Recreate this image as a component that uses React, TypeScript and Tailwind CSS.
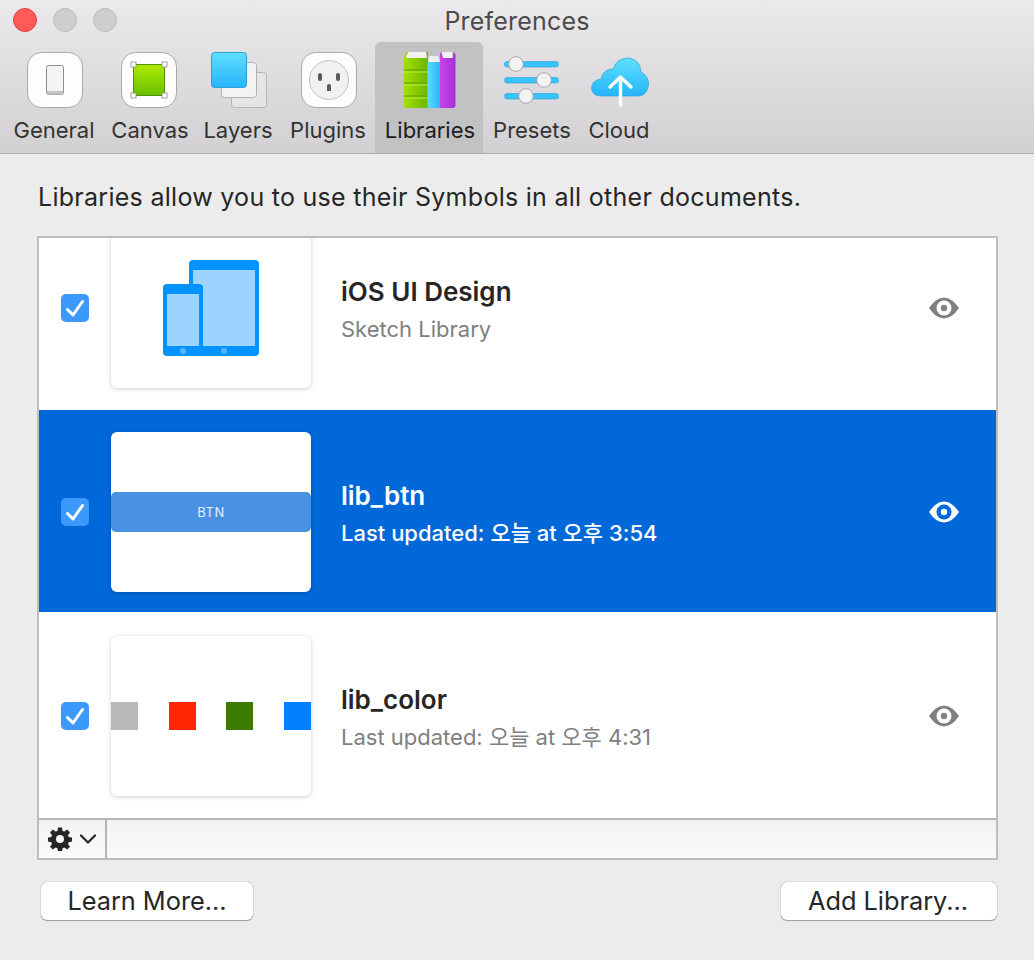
function GeneralIcon() {
  return (
    <svg width="60" height="60" viewBox="0 0 60 60">
      <rect x="2.5" y="2.5" width="55" height="55" rx="14" fill="#fdfdfd" stroke="#a9a9a9" />
      <rect x="21.5" y="15.5" width="17" height="29" rx="2" fill="#f4f4f4" stroke="#8f8f8f" />
      <rect x="22" y="41" width="16" height="3.5" fill="#c4c4c4" />
    </svg>
  );
}

function CanvasIcon() {
  return (
    <svg width="60" height="60" viewBox="0 0 60 60">
      <defs>
        <linearGradient id="cv" x1="0" y1="0" x2="0" y2="1">
          <stop offset="0" stopColor="#aeea00" />
          <stop offset="1" stopColor="#68bf00" />
        </linearGradient>
      </defs>
      <rect x="2.5" y="2.5" width="55" height="55" rx="14" fill="#fdfdfd" stroke="#a9a9a9" />
      <rect x="14.5" y="14.5" width="31" height="31" fill="url(#cv)" stroke="#4f9400" />
      {[
        [12, 12],
        [43, 12],
        [12, 43],
        [43, 43],
      ].map(([x, y]) => (
        <rect key={`${x}-${y}`} x={x} y={y} width="5" height="5" fill="#fff" stroke="#8a8a8a" strokeWidth="0.8" />
      ))}
    </svg>
  );
}

function LayersIcon() {
  return (
    <svg width="60" height="60" viewBox="0 0 60 60">
      <defs>
        <linearGradient id="ly" x1="0" y1="0" x2="0" y2="1">
          <stop offset="0" stopColor="#5fe0ff" />
          <stop offset="1" stopColor="#25b4fb" />
        </linearGradient>
      </defs>
      <rect x="22.5" y="22.5" width="35" height="35" rx="3" fill="#e6e5e6" stroke="#b5b5b5" />
      <rect x="12.5" y="12.5" width="35" height="35" rx="3" fill="#f3f3f3" stroke="#b0b0b0" />
      <rect x="2.5" y="2.5" width="35" height="35" rx="3" fill="url(#ly)" stroke="#2a9fd8" />
    </svg>
  );
}

function PluginsIcon() {
  return (
    <svg width="60" height="60" viewBox="0 0 60 60">
      <rect x="2.5" y="2.5" width="55" height="55" rx="14" fill="#fdfdfd" stroke="#a9a9a9" />
      <circle cx="30" cy="30" r="19.5" fill="#f1f1f1" stroke="#c2c2c2" />
      <rect x="19" y="23" width="4" height="8" rx="2" fill="#5a5a5a" />
      <rect x="37" y="23" width="4" height="8" rx="2" fill="#5a5a5a" />
      <path d="M28 41v-5a2 2 0 0 1 4 0v5z" fill="#5a5a5a" />
    </svg>
  );
}

function LibrariesIcon() {
  return (
    <svg width="60" height="60" viewBox="0 0 60 60">
      <defs>
        <linearGradient id="bg" x1="0" y1="0" x2="1" y2="0">
          <stop offset="0" stopColor="#a6de00" />
          <stop offset="1" stopColor="#6ab800" />
        </linearGradient>
        <linearGradient id="bb" x1="0" y1="0" x2="1" y2="0">
          <stop offset="0" stopColor="#5bdcff" />
          <stop offset="1" stopColor="#2bb4f5" />
        </linearGradient>
        <linearGradient id="bp" x1="0" y1="0" x2="1" y2="0">
          <stop offset="0" stopColor="#cc44ec" />
          <stop offset="1" stopColor="#a42fd4" />
        </linearGradient>
      </defs>
      {/* green book */}
      <path d="M4 8Q5 4 7 2L28 2 28 58H6Q4 58 4 56z" fill="url(#bg)" />
      <path d="M6 8Q7 4 8.500 2H26L27 8z" fill="#f2f2f2" />
      {[20, 33, 46].map((y) => (
        <path key={y} d={`M4 ${y}h24`} stroke="#5fa600" strokeWidth="1.200" />
      ))}
      {[22, 35, 48].map((y) => (
        <path key={y} d={`M4 ${y}h24`} stroke="#c3ea45" strokeWidth="1" />
      ))}
      {/* blue book */}
      <path d="M29 6h9l2 7H28z" fill="#eef0f0" />
      <rect x="27.500" y="12" width="13" height="46" rx="1" fill="url(#bb)" />
      {/* purple book */}
      <path d="M41 2h11v6H43z" fill="#f2f2f2" />
      <path d="M40 3l1.500-1 1.500 6h10l.5-6 1 1q1 1 1 2v50q0 3-3 3H40z" fill="url(#bp)" />
    </svg>
  );
}

function PresetsIcon() {
  return (
    <svg width="60" height="60" viewBox="0 0 60 60">
      {[
        [14, 14],
        [30, 42],
        [46, 24],
      ].map(([y, x]) => (
        <g key={y}>
          <rect x="2.500" y={y - 2.5} width="54" height="5.500" rx="2.500" fill="#38c3fb" stroke="#2ba0dc" strokeWidth="0.6" />
          <circle cx={x} cy={y} r="7.300" fill="#f3f3f3" stroke="#a8a8a8" />
        </g>
      ))}
    </svg>
  );
}

function CloudIcon() {
  return (
    <svg width="60" height="60" viewBox="0 0 60 60">
      <defs>
        <linearGradient id="cl" x1="0" y1="0" x2="0" y2="1">
          <stop offset="0" stopColor="#5fe0ff" />
          <stop offset="1" stopColor="#25b4fb" />
        </linearGradient>
      </defs>
      <path
        d="M11 46Q2 46 1.500 38Q2 30 11 29Q13 19 23 19Q27 8 38 8Q50 9 51 22Q59 26 58.500 35Q57 46 48 46z"
        fill="url(#cl)"
        stroke="#2ba0dc"
        strokeWidth="0.7"
      />
      <path d="M30.500 55V28M20 37l10.500-10L41 37" fill="none" stroke="#fbfbfb" strokeWidth="3.400" strokeLinecap="round" strokeLinejoin="round" />
    </svg>
  );
}

function Eye({ color }: { color: string }) {
  return (
    <svg width="30" height="22" viewBox="0 0 30 22" className="shrink-0">
      <path d="M0 11Q7 0.500 15 0.500T30 11Q23 21.500 15 21.500T0 11z" fill={color} />
      <circle cx="15" cy="11" r="7.500" fill={color === '#ffffff' ? '#0068d9' : '#ffffff'} />
      <circle cx="15" cy="11" r="3.200" fill={color} />
    </svg>
  );
}

function Check() {
  return (
    <div className="flex h-[28px] w-[28px] shrink-0 items-center justify-center rounded-[5px] bg-[#3b99fc]">
      <svg width="18" height="18" viewBox="0 0 18 18">
        <path d="M1.500 10.500l5.500 5.500L16.500 2.500" fill="none" stroke="#fff" strokeWidth="3" strokeLinecap="round" strokeLinejoin="round" />
      </svg>
    </div>
  );
}

function Devices() {
  return (
    <svg width="98" height="98" viewBox="0 0 98 98">
      <rect x="27" y="2" width="70" height="96" rx="4" fill="#0293ff" />
      <rect x="31" y="12" width="62" height="76" fill="#9cd4ff" />
      <circle cx="62" cy="93" r="3" fill="#55b4ff" />
      <rect x="1" y="26" width="40" height="72" rx="4" fill="#0293ff" />
      <rect x="5" y="36" width="32" height="52" fill="#9cd4ff" />
      <circle cx="21" cy="93" r="3" fill="#55b4ff" />
    </svg>
  );
}

const tabs = [
  { label: 'General', width: 'w-[108px]', icon: <GeneralIcon />, iconClass: 'ml-[2px]' },
  { label: 'Canvas', width: 'w-[84px]', icon: <CanvasIcon />, iconClass: '-ml-[2px]' },
  { label: 'Layers', width: 'w-[92px]', icon: <LayersIcon />, iconClass: 'ml-[2px]' },
  { label: 'Plugins', width: 'w-[88px]', icon: <PluginsIcon />, iconClass: 'ml-[2px]' },
  { label: 'Libraries', width: 'w-[108px] ml-[3px] pl-[2px] bg-[#c3c2c3] rounded-t-[6px]', icon: <LibrariesIcon />, iconClass: '' },
  { label: 'Presets', width: 'w-[96px] pl-[2px]', icon: <PresetsIcon />, iconClass: '' },
  { label: 'Cloud', width: 'w-[80px]', icon: <CloudIcon />, iconClass: 'ml-[1px]' },
];

function Swatches() {
  return (
    <div className="flex h-full items-center justify-between">
      <div className="h-[28px] w-[27px] bg-[#b9b9b9]" />
      <div className="h-[28px] w-[27px] bg-[#ff2600]" />
      <div className="h-[28px] w-[27px] bg-[#3d7a00]" />
      <div className="h-[28px] w-[27px] bg-[#0080ff]" />
    </div>
  );
}

function Row({
  title,
  subtitle,
  selected,
  children,
}: {
  title: string;
  subtitle: string;
  selected?: boolean;
  children: React.ReactNode;
}) {
  return (
    <div className={`mb-[2px] h-[202px] pl-[22px] pr-[37px] pt-[22px] ${selected ? 'bg-[#0068d9]' : 'bg-white'}`}>
      <div className="flex h-[160px] items-center">
        <Check />
        <div className="ml-[22px] h-[160px] w-[200px] shrink-0 overflow-hidden rounded-[6px] bg-white shadow-[0_1px_4px_rgba(0,0,0,0.2)]">
          {children}
        </div>
        <div className="ml-[30px] flex-1 pt-[6px]">
          <div className={`text-[26px] leading-[36px] font-semibold ${selected ? 'text-white' : 'text-[#262626]'}`}>{title}</div>
          <div className={`text-[22px] leading-[38px] ${selected ? 'font-medium text-white' : 'text-[#808080]'}`}>{subtitle}</div>
        </div>
        <Eye color={selected ? '#ffffff' : '#808080'} />
      </div>
    </div>
  );
}

export default function App() {
  return (
    <div className="h-[960px] w-[1034px] overflow-hidden bg-[#ececec] font-['Inter','Noto_Sans_CJK_KR',sans-serif]">
      {/* Title bar + toolbar */}
      <div className="h-[154px] border-b-[1px] border-[#ababab] bg-gradient-to-b from-[#ebe9eb] to-[#d2d0d2]">
        <div className="grid h-[42px] grid-cols-[1fr_auto_1fr] pt-[8px]">
          <div className="flex gap-[16px] pl-[13px]">
            <div className="h-[24px] w-[24px] rounded-full border border-[#e0443e] bg-[#fc5b57]" />
            <div className="h-[24px] w-[24px] rounded-full border border-[#bcbcbc] bg-[#cfcdcf]" />
            <div className="h-[24px] w-[24px] rounded-full border border-[#bcbcbc] bg-[#cfcdcf]" />
          </div>
          <div className="text-[25px] leading-[26px] tracking-[0.2px] text-[#4b4b4b]">Preferences</div>
          <div />
        </div>
        <div className="flex h-[111px]">
          {tabs.map((tab) => (
            <div key={tab.label} className={`flex h-[111px] flex-col items-center ${tab.width}`}>
              <div className={`mt-[8px] h-[60px] w-[60px] ${tab.iconClass}`}>{tab.icon}</div>
              <div className={`mt-[6px] text-[22px] leading-[28px] ${tab.label === 'Libraries' ? 'text-[#1d1d1d]' : 'text-[#333333]'}`}>{tab.label}</div>
            </div>
          ))}
        </div>
      </div>

      {/* Body */}
      <div className="px-[37px]">
        <p className="pt-[28px] pl-[1px] text-[25px] leading-[30px] tracking-[0.28px] text-[#262626]">
          Libraries allow you to use their Symbols in all other documents.
        </p>
        <div className="mt-[24px] flex h-[624px] w-[961px] flex-col border-2 border-[#bdbdbd]">
          <div className="h-[580px] overflow-hidden bg-white">
            <div className="-mt-[32px]">
              <Row title="iOS UI Design" subtitle="Sketch Library">
                <div className="flex h-full justify-center pt-[30px]">
                  <Devices />
                </div>
              </Row>
              <Row title="lib_btn" subtitle="Last updated: 오늘 at 오후 3:54" selected>
                <div className="flex h-full items-center">
                  <div className="flex h-[40px] w-full items-center justify-center rounded-[5px] bg-[#4a90e2] pt-[2px] text-[13px] tracking-[0.5px] text-[#e6f0fb]">
                    BTN
                  </div>
                </div>
              </Row>
              <Row title="lib_color" subtitle="Last updated: 오늘 at 오후 4:31">
                <Swatches />
              </Row>
            </div>
          </div>
          <div className="flex h-[40px] border-t-2 border-[#b5b5b5] bg-gradient-to-b from-[#f2f2f2] to-[#fbfbfb]">
            <div className="flex w-[68px] items-center gap-[7px] border-r-2 border-[#b5b5b5] pl-[9px]">
              <svg width="24" height="24" viewBox="0 0 24 24" className="shrink-0">
                <path
                  fill="#262626"
                  fillRule="evenodd"
                  d="M10 0.500h4l.6 3.400 1.700.7 2.900-2 2.800 2.800-2 2.900.7 1.700 3.300.6v4l-3.300.6-.7 1.700 2 2.900-2.800 2.800-2.900-2-1.700.7-.6 3.400h-4l-.6-3.400-1.700-.7-2.900 2-2.800-2.800 2-2.900-.7-1.700-3.300-.6v-4l3.300-.6.7-1.700-2-2.900 2.800-2.800 2.900 2 1.700-.7zM12 8a4 4 0 1 0 0 8 4 4 0 0 0 0-8z"
                />
              </svg>
              <svg width="18" height="12" viewBox="0 0 18 12" className="shrink-0">
                <path d="M2 2.500l7 7 7-7" fill="none" stroke="#262626" strokeWidth="2.200" strokeLinecap="round" strokeLinejoin="round" />
              </svg>
            </div>
          </div>
        </div>
        <div className="mt-[22px] flex justify-between pl-[4px]">
          <button className="h-[38px] w-[212px] rounded-[6px] bg-white text-[25.300px] leading-[38px] text-[#262626] shadow-[0_0_1px_rgba(0,0,0,0.5),0_1px_1px_rgba(0,0,0,0.3)]">
            Learn More...
          </button>
          <button className="h-[38px] w-[216px] rounded-[6px] bg-white pr-[2px] text-[25.300px] leading-[38px] text-[#262626] shadow-[0_0_1px_rgba(0,0,0,0.5),0_1px_1px_rgba(0,0,0,0.3)]">
            Add Library...
          </button>
        </div>
      </div>
    </div>
  );
}
